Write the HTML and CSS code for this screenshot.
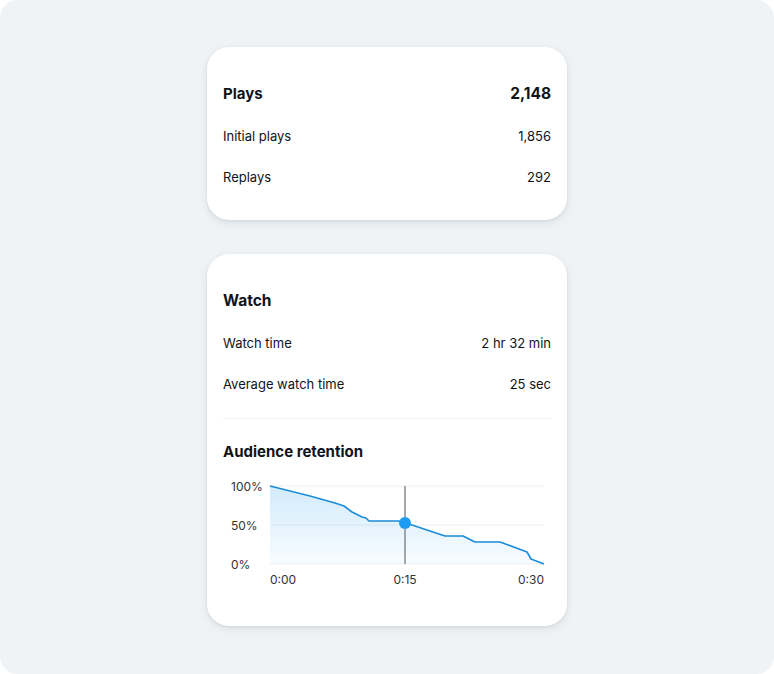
FILE: index.html
```html
<!DOCTYPE html>
<html>
<head>
<meta charset="utf-8">
<link rel="stylesheet" href="styles.css">
</head>
<body>
<div class="page">
  <section class="card">
    <div class="row head">
      <span>Plays</span><span>2,148</span>
    </div>
    <div class="row"><span>Initial plays</span><span>1,856</span></div>
    <div class="row"><span>Replays</span><span>292</span></div>
  </section>
  <section class="card">
    <div class="row head"><span>Watch</span></div>
    <div class="row"><span>Watch time</span><span>2 hr 32 min</span></div>
    <div class="row"><span>Average watch time</span><span>25 sec</span></div>
    <div class="divider"></div>
    <h3 class="subhead">Audience retention</h3>
    <svg class="chart" width="328" height="120" viewBox="0 0 328 120">
      <defs>
        <linearGradient id="fill" x1="0" y1="0" x2="0" y2="1">
          <stop offset="0" stop-color="#1d9bf0" stop-opacity="0.2"/>
          <stop offset="1" stop-color="#1d9bf0" stop-opacity="0.03"/>
        </linearGradient>
      </defs>
      <g class="grid">
        <line x1="47" y1="14" x2="321" y2="14"/>
        <line x1="47" y1="53" x2="321" y2="53"/>
        <line x1="47" y1="92" x2="321" y2="92"/>
      </g>
      <path class="area" d="M47 14 L87 24 L112 31 L121 34 L129 40 L139 45 L143 46 L146 49 L175 49 L182 50 L189 53 L222 64 L240 64 L252 70 L277 70 L304 80 L308 87 L321 92 L47 92 Z"/>
      <line class="cursor" x1="182" y1="14" x2="182" y2="92"/>
      <polyline class="line" points="47,14 87,24 112,31 121,34 129,40 139,45 143,46 146,49 175,49 182,50 189,53 222,64 240,64 252,70 277,70 304,80 308,87 321,92"/>
      <circle class="dot" cx="182" cy="51" r="6"/>
      <g class="ylab">
        <text x="8" y="19">100%</text>
        <text x="8" y="58">50%</text>
        <text x="8" y="97">0%</text>
      </g>
      <g class="xlab">
        <text x="47" y="112" text-anchor="start">0:00</text>
        <text x="182" y="112" text-anchor="middle">0:15</text>
        <text x="321" y="112" text-anchor="end">0:30</text>
      </g>
    </svg>
  </section>
</div>
</body>
</html>
```

FILE: styles.css
```css
html, body {
  margin: 0;
  padding: 0;
  background: #ffffff;
}
body {
  font-family: Inter, "Liberation Sans", sans-serif;
  color: #0f1419;
}
.page {
  box-sizing: border-box;
  width: 774px;
  height: 674px;
  background: #eff3f6;
  border-radius: 18px;
  display: flex;
  flex-direction: column;
  align-items: center;
  padding-top: 47px;
  gap: 34px;
}
.card {
  box-sizing: border-box;
  width: 360px;
  background: #ffffff;
  border-radius: 22px;
  padding: 24px 16px 23px;
  box-shadow: 0 1px 3px rgba(15, 20, 25, 0.08), 0 3px 10px rgba(15, 20, 25, 0.08);
  display: flex;
  flex-direction: column;
}
.card:last-child {
  padding-bottom: 34px;
}
.row {
  height: 41px;
  display: flex;
  align-items: center;
  justify-content: space-between;
  font-size: 13px;
}
.row.head {
  height: 44px;
  font-size: 15px;
  font-weight: 700;
}
.row.head span:last-child {
  font-size: 15.5px;
}
.divider {
  height: 1px;
  background: #eff3f4;
  margin-top: 14px;
}
.subhead {
  margin: 21px 0 8px;
  font-size: 15px;
  font-weight: 700;
  line-height: 24px;
}
.chart {
  display: block;
}
.grid line {
  stroke: #eceff1;
  stroke-width: 1;
}
.area {
  fill: url(#fill);
}
.line {
  fill: none;
  stroke: #1a8cd8;
  stroke-width: 1.6;
  stroke-linejoin: round;
}
.cursor {
  stroke: #7d8489;
  stroke-width: 1.4;
}
.dot {
  fill: #1d9bf0;
}
.ylab text, .xlab text {
  font-family: Inter, "Liberation Sans", sans-serif;
  font-size: 12px;
  fill: #2f3336;
}
```
